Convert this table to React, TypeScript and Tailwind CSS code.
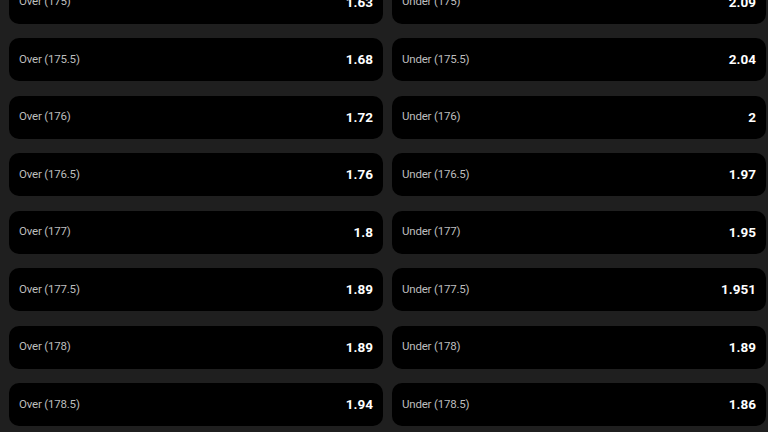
const rows = [
  { line: '175', over: '1.63', under: '2.09' },
  { line: '175.5', over: '1.68', under: '2.04' },
  { line: '176', over: '1.72', under: '2' },
  { line: '176.5', over: '1.76', under: '1.97' },
  { line: '177', over: '1.8', under: '1.95' },
  { line: '177.5', over: '1.89', under: '1.951' },
  { line: '178', over: '1.89', under: '1.89' },
  { line: '178.5', over: '1.94', under: '1.86' },
]

function OddsCell({ label, price }: { label: string; price: string }) {
  return (
    <div className="flex h-[43px] items-center justify-between rounded-[10px] bg-black px-[10px]">
      <span className="text-[11.5px] font-normal tracking-[-0.2px] text-[#bdbdbd]">{label}</span>
      <span className="text-[13.5px] font-bold text-white">{price}</span>
    </div>
  )
}

export default function App() {
  return (
    <main
      className="h-[432px] w-[768px] overflow-hidden bg-[#1f1f1f] pl-[9px] pr-[2px]"
      style={{ fontFamily: 'Roboto, "Noto Sans", sans-serif' }}
    >
      <div className="-mt-[19.5px] flex flex-col gap-[14.5px]">
        {rows.map((r) => (
          <div key={r.line} className="grid grid-cols-2 gap-[9px]">
            <OddsCell label={`Over (${r.line})`} price={r.over} />
            <OddsCell label={`Under (${r.line})`} price={r.under} />
          </div>
        ))}
      </div>
    </main>
  )
}
